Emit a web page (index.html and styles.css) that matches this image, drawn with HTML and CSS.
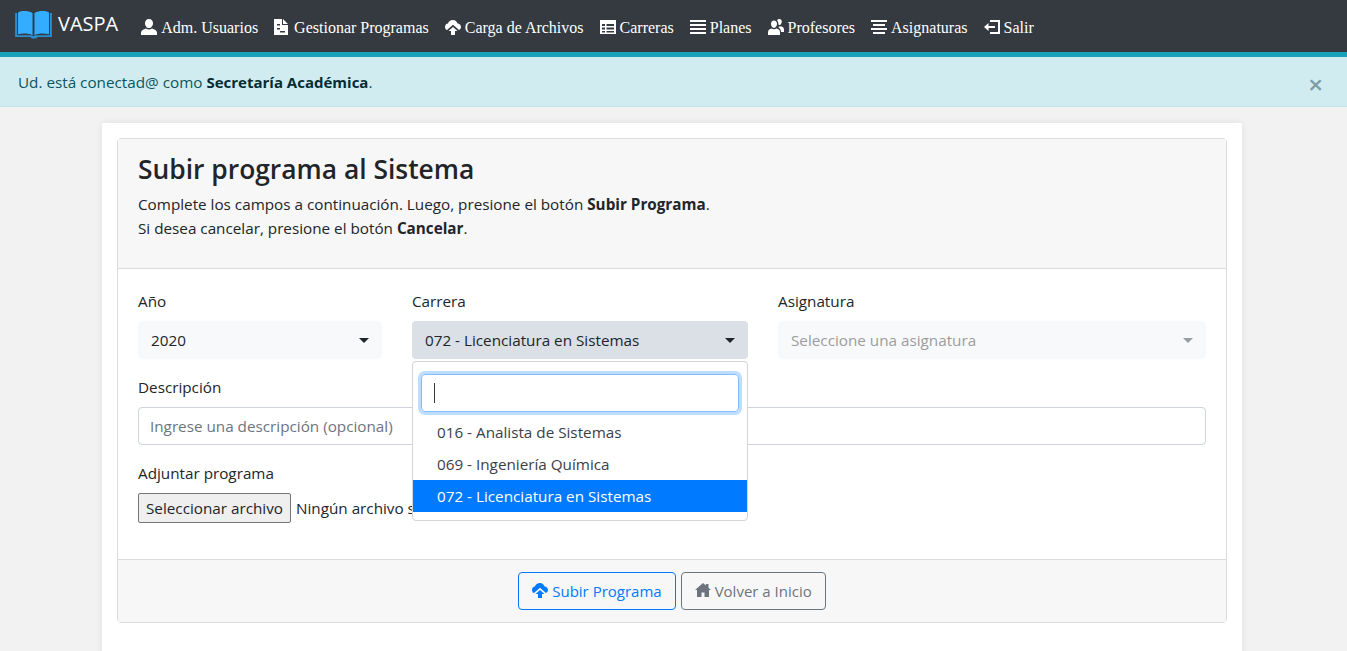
FILE: index.html
```html
<!DOCTYPE html>
<html lang="es">
<head>
<meta charset="utf-8">
<title>VASPA</title>
<link rel="stylesheet" href="styles.css">
</head>
<body>
<nav class="navbar">
  <a class="brand">
    <svg class="book" viewBox="0 0 38 30"><path fill="#2b8fcc" d="M0 3h2v23h14c1.500 0 2.300.5 3 1 .7-.5 1.500-1 3-1h14V3h2v25H23l-1 1.500h-5L16 28H0z"/><path fill="#33adff" d="M3 2.500C7 .5 13 .5 18 3v23c-4-2-10-2-15-1zM35 2.500C31 .5 25 .5 20 3v23c4-2 10-2 15-1z"/></svg>
    <span>VASPA</span>
  </a>
  <a class="nav-item"><svg class="ni" viewBox="0 0 16 16"><path d="M8 0c2.500 0 4 1.800 4 4.200S10.300 9 8 9 4 6.600 4 4.200 5.500 0 8 0zM0 16v-2.500C0 11.500 2.500 10.300 5 9.500c.9.600 1.900.9 3 .9s2.100-.3 3-.9c2.500.8 5 2 5 4V16z"/></svg>Adm. Usuarios</a>
  <a class="nav-item"><svg class="ni" viewBox="0 0 16 16"><path fill-rule="evenodd" d="M0 0h8v6h6v10H0zM9 0l5 5H9zM3 5v1.500h3V5zM3 9v1.500h3V9zM6 12v1.500h5V12z"/></svg>Gestionar Programas</a>
  <a class="nav-item"><svg class="ni" viewBox="0 0 16 16"><path d="M8 1c2.300 0 3.800 1.300 4.300 3.200C14.400 4.400 16 6 16 8c0 1.400-.8 2.600-2 3L8 5.700 2 11C.8 10.600 0 9.300 0 7.900c0-1.800 1.300-3.200 3-3.400C3.500 2.500 5.500 1 8 1zM8 8l4.500 4H10v4H6v-4H3.500z"/></svg>Carga de Archivos</a>
  <a class="nav-item"><svg class="ni" viewBox="0 0 16 16"><path fill-rule="evenodd" d="M0 1h16v14H0zM2 5v2h3V5zM6.500 5v2H14V5zM2 8.500v2h3v-2zM6.500 8.500v2H14v-2zM2 12v1.500h3V12zM6.500 12v1.500H14V12z"/></svg>Carreras</a>
  <a class="nav-item"><svg class="ni" viewBox="0 0 16 16"><path d="M0 1h16v2H0zM0 5h16v2H0zM0 9h16v2H0zM0 13h16v2H0z"/></svg>Planes</a>
  <a class="nav-item"><svg class="ni" viewBox="0 0 16 16"><path d="M6 1.500c1.900 0 3 1.500 3 3.300S7.900 9 6 9 3 6.600 3 4.800 4.100 1.500 6 1.500zM0 16v-3c0-1.800 1.500-2.900 3.500-3.500.7.500 1.500.8 2.500.8s1.800-.3 2.500-.8c2 .6 3.500 1.700 3.500 3.500v3zM11.500 0c1.400 0 2.300 1.100 2.300 2.500S12.900 6 11.500 6c-.5 0-.9-.2-1.200-.4C10.500 4 10 2.200 9 1.300 9.600.5 10.500 0 11.500 0zM11 7.200c.8.300 1.500.3 2 0 1.600.5 3 1.300 3 3V13h-3c0-2-1-3.500-2.500-4.500.3-.4.500-.8.500-1.300z"/></svg>Profesores</a>
  <a class="nav-item"><svg class="ni" viewBox="0 0 16 16"><path d="M0 1h16v2H0zM2 5h12v2H2zM0 9h16v2H0zM2 13h12v2H2z"/></svg>Asignaturas</a>
  <a class="nav-item"><svg class="ni" viewBox="0 0 16 16"><path d="M6 1h10v14H6v-2h8V3H6zM0 8l4.500-4v3H11v2H4.500v3z"/></svg>Salir</a>
</nav>

<div class="alert">
  <span>Ud. está conectad@ como <strong>Secretaría Académica</strong>.</span>
  <span class="close">×</span>
</div>

<main class="container">
  <section class="card">
    <header class="card-header">
      <h3>Subir programa al Sistema</h3>
      <p>Complete los campos a continuación. Luego, presione el botón <strong>Subir Programa</strong>.</p>
      <p>Si desea cancelar, presione el botón <strong>Cancelar</strong>.</p>
    </header>
    <form class="card-body">
      <div class="row">
        <div class="field">
          <label>Año</label>
          <div class="select">2020<i class="caret"></i></div>
        </div>
        <div class="field field-open">
          <label>Carrera</label>
          <div class="select select-active">072 - Licenciatura en Sistemas<i class="caret"></i></div>
          <div class="dropdown">
            <div class="search"><span class="cursor"></span></div>
            <ul>
              <li>016 - Analista de Sistemas</li>
              <li>069 - Ingeniería Química</li>
              <li class="active">072 - Licenciatura en Sistemas</li>
            </ul>
          </div>
        </div>
        <div class="field">
          <label>Asignatura</label>
          <div class="select select-disabled">Seleccione una asignatura<i class="caret"></i></div>
        </div>
      </div>
      <div class="field block">
        <label>Descripción</label>
        <div class="input">Ingrese una descripción (opcional)</div>
      </div>
      <div class="field block">
        <label>Adjuntar programa</label>
        <div class="file"><span class="file-btn">Seleccionar archivo</span><span class="file-name">Ningún archivo s</span></div>
      </div>
    </form>
    <footer class="card-footer">
      <a class="btn btn-blue"><svg class="bi" viewBox="0 0 16 16"><path d="M8 1c2.300 0 3.800 1.300 4.300 3.200C14.400 4.400 16 6 16 8c0 1.400-.8 2.600-2 3L8 5.700 2 11C.8 10.600 0 9.300 0 7.900c0-1.800 1.300-3.200 3-3.400C3.500 2.500 5.500 1 8 1zM8 8l4.500 4H10v4H6v-4H3.500z"/></svg>Subir Programa</a>
      <a class="btn btn-gray"><svg class="bi" viewBox="0 0 16 16"><path d="M8 1l3 2.600V2h2.500v3.800L16 8h-2v7H9.500v-4.500h-3V15H2V8H0z"/></svg>Volver a Inicio</a>
    </footer>
  </section>
</main>
</body>
</html>
```
FILE: styles.css
```css
* { box-sizing: border-box; }
html, body { margin: 0; height: 100%; }
body {
  background: #f2f2f2;
  color: #212529;
  font: 400 15.25px/24px "Open Sans", "Noto Sans", sans-serif;
  overflow: hidden;
}
.navbar {
  display: flex;
  align-items: center;
  height: 57px;
  padding-left: 15px;
  background: #343a40;
  border-bottom: 5px solid #17a2b8;
  color: #fff;
}
.brand {
  display: flex;
  align-items: center;
  gap: 6px;
  font-size: 20px;
  margin-right: 23px;
  margin-top: -4px;
}
.book { width: 37px; height: 29px; }
.nav-item {
  display: flex;
  align-items: center;
  gap: 4px;
  margin-top: 4px;
  margin-right: 16px;
  font: 16px/24px "Liberation Serif", serif;
}
.ni { width: 16px; height: 16px; fill: #fff; margin-top: -3px; }
.alert {
  display: flex;
  justify-content: space-between;
  align-items: center;
  height: 50px;
  padding: 0 24px 0 18px;
  background: #d1ecf1;
  border-bottom: 1px solid #bee5eb;
  color: #0c5460;
}
.alert strong { color: #062c33; font-weight: 700; font-size: 15px; }
.close {
  font-size: 26px;
  font-weight: 600;
  color: #7d9ca3;
  line-height: 1;
  margin-top: 4px;
}
.container {
  width: 1140px;
  margin: 16px 0 0 102px;
  padding: 15px 15px 40px;
  background: #fff;
  box-shadow: 0 0 8px rgba(0, 0, 0, .08);
}
.card {
  border: 1px solid #dcdcdc;
  border-radius: 4px;
}
.card-header {
  height: 130px;
  padding: 13px 20px;
  background: #f7f7f7;
  border-bottom: 1px solid #dcdcdc;
}
h3 {
  margin: 0 0 6px;
  font-size: 26.4px;
  line-height: 34px;
  font-weight: 600;
}
p { margin: 0; }
.card-body { padding: 20px 20px 0; height: 290px; }
.row {
  display: grid;
  grid-template-columns: 244px 336px 428px;
  gap: 30px;
}
.field { position: relative; }
.block { margin-top: 16px; }
label { display: block; margin-bottom: 8px; }
.select {
  position: relative;
  height: 38px;
  padding: 0 13px;
  line-height: 38px;
  background: #f8f9fa;
  border-radius: 4px;
}
.select-active { background: #dae0e6; }
.select-disabled { color: #9a9da0; }
.caret {
  position: absolute;
  right: 13px;
  top: 17px;
  border-style: solid;
  border-width: 5px 5.5px 0;
  border-color: #212529 transparent transparent;
}
.select-disabled .caret { border-top-color: #9a9da0; }
.dropdown {
  position: absolute;
  z-index: 2;
  left: 0;
  right: 0;
  top: 72px;
  height: 160px;
  padding-top: 8px;
  background: #fff;
  border: 1px solid #d5d5d5;
  border-radius: 4px;
}
.search {
  display: flex;
  align-items: center;
  height: 38px;
  margin: 4px 8px 0;
  padding-left: 12px;
  border: 1px solid #80bdff;
  border-radius: 4px;
  box-shadow: 0 0 0 3px rgba(0, 123, 255, .25);
}
.cursor { width: 1px; height: 20px; background: #343a40; }
.dropdown ul { list-style: none; margin: 4px 0 0; padding: 0; }
.dropdown li { height: 32px; padding: 0 24px; line-height: 32px; color: #3b4046; }
.dropdown li.active { background: #007bff; color: #fff; }
.input {
  height: 38px;
  padding: 0 11px;
  line-height: 36px;
  border: 1px solid #ced4da;
  border-radius: 4px;
  color: #6c757d;
}
.file { display: flex; align-items: center; gap: 5px; height: 30px; }
.file-btn {
  height: 30px;
  padding: 0 7px;
  line-height: 28px;
  background: #efefef;
  border: 1px solid #767676;
  border-radius: 2px;
}
.card-footer {
  display: flex;
  justify-content: center;
  gap: 5px;
  padding: 12px 20px;
  background: #f7f7f7;
  border-top: 1px solid #dcdcdc;
}
.btn {
  display: flex;
  align-items: center;
  gap: 4px;
  height: 38px;
  padding: 0 13px;
  border: 1px solid;
  border-radius: 4px;
  font-size: 15px;
}
.btn-blue { color: #007bff; }
.btn-gray { color: #6c757d; }
.bi { width: 16px; height: 16px; fill: currentColor; margin-top: -2px; }
```
